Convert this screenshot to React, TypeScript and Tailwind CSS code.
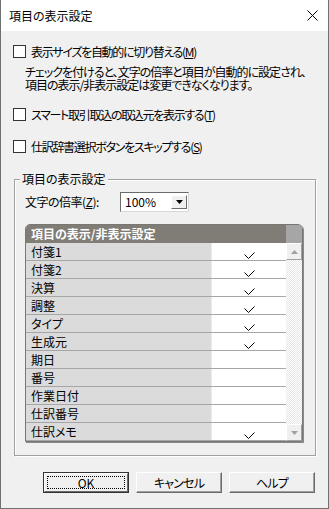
import type { ReactNode } from "react";

const font =
  "font-['Noto_Sans_CJK_JP','Noto_Sans',sans-serif] [font-feature-settings:'palt'_1] [font-kerning:normal]";

const rows: { label: string; on: boolean }[] = [
  { label: "付箋1", on: true },
  { label: "付箋2", on: true },
  { label: "決算", on: true },
  { label: "調整", on: true },
  { label: "タイプ", on: true },
  { label: "生成元", on: true },
  { label: "期日", on: false },
  { label: "番号", on: false },
  { label: "作業日付", on: false },
  { label: "仕訳番号", on: false },
  { label: "仕訳メモ", on: true },
];

function CheckRow({ children, mt }: { children: ReactNode; mt: string }) {
  return (
    <div className={`flex h-[13px] items-center pl-[12px] ${mt}`}>
      <span className="h-[13px] w-[13px] flex-shrink-0 border border-[#333] bg-white" />
      <span className="ml-[5px] whitespace-nowrap text-[12px] leading-[13px] tracking-[-1.3px] text-black">{children}</span>
    </div>
  );
}

function Tick() {
  return (
    <svg width="11" height="7" viewBox="0 0 11 7" className="mb-[1px]">
      <polyline points="0.5,2.5 4.5,6.5 10.5,0.5" fill="none" stroke="#000" strokeWidth="1" />
    </svg>
  );
}

function ScrollBtn({ up }: { up: boolean }) {
  return (
    <div className="flex h-[17px] w-[16px] items-center justify-center border border-t-white border-l-white border-r-[#a0a0a0] border-b-[#a0a0a0] bg-[#f0f0f0]">
      <svg width="7" height="4" viewBox="0 0 7 4">
        <polygon points={up ? "0,4 7,4 3.5,0" : "0,0 7,0 3.5,4"} fill="#a0a0a0" />
      </svg>
    </div>
  );
}

function Btn({ children, main }: { children: ReactNode; main?: boolean }) {
  if (main) {
    return (
      <div className="h-[21px] w-[86px] border border-[#333] bg-[#f0f0f0]">
        <div className="flex h-full w-full items-center justify-center border border-t-white border-l-white border-r-[#6b6b6b] border-b-[#6b6b6b] p-[2px]">
          <div className="flex h-full w-full items-center justify-center border border-dotted border-black text-[12px] leading-none">
            {children}
          </div>
        </div>
      </div>
    );
  }
  return (
    <div className="flex h-[21px] w-[86px] items-center justify-center border border-t-white border-l-white border-r-[#6b6b6b] border-b-[#6b6b6b] bg-[#f0f0f0] text-[12px] leading-none tracking-[-0.8px] shadow-[inset_-1px_-1px_0_#a0a0a0]">
      {children}
    </div>
  );
}

export default function App() {
  return (
    <div className={`flex h-[509px] w-[329px] flex-col border-x border-b border-[#707070] bg-[#f0f0f0] text-black ${font}`}>
      {/* title bar */}
      <div className="flex h-[31px] flex-shrink-0 items-center justify-between bg-white pl-[8px] pr-[10px]">
        <span className="text-[12px] leading-none">項目の表示設定</span>
        <svg width="11" height="11" viewBox="0 0 11 11">
          <path d="M0.5 0.5 L10.5 10.5 M10.5 0.5 L0.5 10.5" stroke="#000" strokeWidth="1" />
        </svg>
      </div>

      <CheckRow mt="mt-[14px]">
        表示サイズを自動的に切り替える(<span className="underline">M</span>)
      </CheckRow>
      <div className="mt-[7px] whitespace-nowrap pl-[24px] text-[12px] leading-[13px] tracking-[-1px]">
        <div>チェックを付けると、文字の倍率と項目が自動的に設定され、</div>
        <div>項目の表示/非表示設定は変更できなくなります。</div>
      </div>
      <CheckRow mt="mt-[17px]">
        スマート取引取込の取込元を表示する(<span className="underline">T</span>)
      </CheckRow>
      <CheckRow mt="mt-[19px]">
        仕訳辞書選択ボタンをスキップする(<span className="underline">S</span>)
      </CheckRow>

      {/* group box */}
      <div className="relative ml-[13px] mt-[26px] h-[277px] w-[302px] flex-shrink-0 border border-[#a0a0a0] shadow-[inset_1px_1px_0_#fff,1px_1px_0_#fff]">
        <span className="absolute left-[5px] top-[-8px] bg-[#f0f0f0] px-[2px] text-[12px] leading-[14px]">項目の表示設定</span>

        <div className="mt-[12px] flex items-center pl-[10px]">
          <span className="w-[95px] text-[12px] leading-none tracking-[-0.5px]">
            文字の倍率(<span className="underline">Z</span>):
          </span>
          <div className="flex h-[20px] w-[69px] items-center justify-between border border-t-[#6b6b6b] border-l-[#6b6b6b] border-r-[#d8d8d8] border-b-[#d8d8d8] bg-white pl-[4px] pr-[1px]">
            <span className="text-[12px] leading-none">100%</span>
            <div className="flex h-[14px] w-[16px] items-center justify-center border border-t-white border-l-white border-r-[#6b6b6b] border-b-[#6b6b6b] bg-[#f0f0f0]">
              <svg width="7" height="4" viewBox="0 0 7 4">
                <polygon points="0,0 7,0 3.5,4" fill="#000" />
              </svg>
            </div>
          </div>
        </div>

        {/* grid */}
        <div className="ml-[10px] mt-[12px] w-[278px] overflow-hidden rounded-t-[5px] border border-[#7a7772] shadow-[1px_1px_0_#8a8a8a]">
          <div className="flex h-[18px]">
            <div className="flex w-[260px] items-center bg-[#807d77] pl-[5px] text-[12px] font-bold leading-none text-white">
              項目の表示/非表示設定
            </div>
            <div className="flex-1 bg-[#a6a6a6]" />
          </div>
          <div className="flex">
            <div className="w-[260px]">
              {rows.map((r) => (
                <div key={r.label} className="flex h-[18px] border-b border-[#a6a6a6]">
                  <div className="flex w-[186px] items-center border-r border-[#ececec] bg-[#dcdbdb] pl-[5px] text-[12px] leading-none">
                    {r.label}
                  </div>
                  <div className="flex flex-1 items-end justify-center bg-white">{r.on && <Tick />}</div>
                </div>
              ))}
            </div>
            <div className="flex w-[16px] flex-col">
              <ScrollBtn up />
              <div className="flex-1 bg-[repeating-conic-gradient(#e6e6e6_0_25%,#fff_0_50%)] bg-[length:2px_2px]" />
              <ScrollBtn up={false} />
            </div>
          </div>
        </div>
      </div>

      {/* buttons */}
      <div className="mt-[16px] flex gap-[7px] pl-[42px]">
        <Btn main>OK</Btn>
        <Btn>キャンセル</Btn>
        <Btn>ヘルプ</Btn>
      </div>
    </div>
  );
}
